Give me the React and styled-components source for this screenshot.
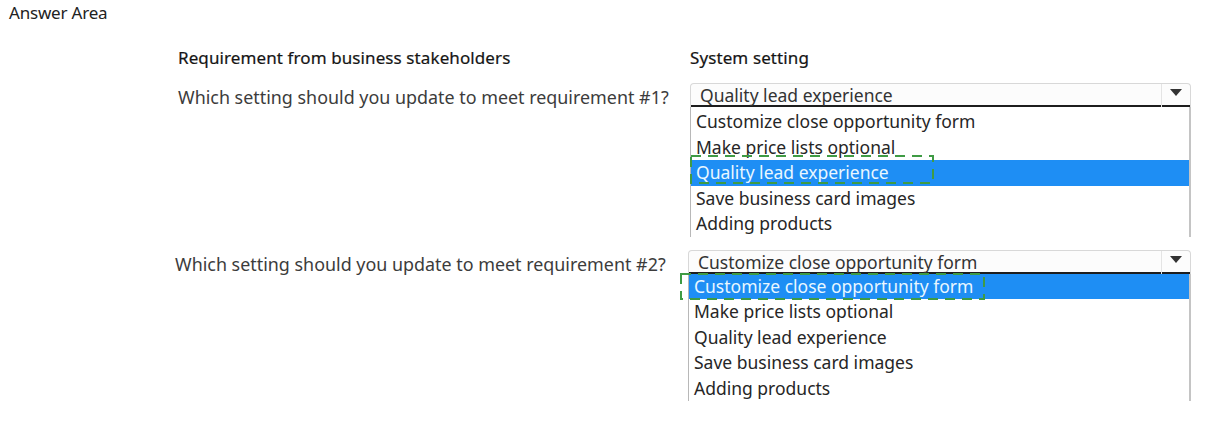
import styled, { createGlobalStyle } from "styled-components"

const Global = createGlobalStyle`
  body {
    margin: 0;
    background: #ffffff;
    font-family: "Noto Sans", "Open Sans", sans-serif;
  }
`

const Page = styled.div`
  width: 1214px;
  height: 448px;
  padding: 3px 0 0 9px;
  box-sizing: border-box;
  background: #fff;
`

const Title = styled.div`
  font-size: 17px;
  color: #222;
  line-height: 20px;
  letter-spacing: -0.2px;
`

const Grid = styled.div`
  display: grid;
  grid-template-columns: 512px 501px;
  margin: 24px 0 0 169px;
`

const Head = styled.div`
  font-size: 17px;
  color: #151515;
  line-height: 22px;
  height: 36px;
  letter-spacing: 0.1px;
  -webkit-text-stroke: 0.2px #151515;
`

const Question = styled.div`
  font-size: 17.9px;
  color: #3c3c3c;
  line-height: 22px;
  padding-top: 3px;
  margin-left: ${(p) => p.$shift || 0}px;
`

const Select = styled.div`
  position: relative;
  margin-left: ${(p) => p.$shift || 0}px;
  margin-bottom: ${(p) => p.$gap || 0}px;
`

const Header = styled.div`
  display: flex;
  height: 24px;
  border: 1px solid #d8d8d8;
  border-bottom: none;
  border-radius: 4px 4px 0 0;
  box-sizing: border-box;
  background: #fcfcfc;
  overflow: hidden;
  box-shadow: inset 0 -2px 0 #1d1d1d;
`

const Value = styled.div`
  flex: 1;
  font-size: 17.5px;
  color: #333;
  line-height: 21px;
  padding: 1px 0 0 9px;
  white-space: nowrap;
  overflow: hidden;
`

const Arrow = styled.div`
  width: 28px;
  border-left: 1px solid #e4e4e4;
  display: flex;
  align-items: center;
  justify-content: center;
  padding-bottom: 6px;
`

const List = styled.div`
  border-left: 1px solid #b8b8b8;
  border-right: 2px solid #c4c4c4;
  padding-top: ${(p) => p.$pad}px;
`

const Option = styled.div`
  height: 25.5px;
  line-height: 25.5px;
  font-size: 17.5px;
  padding-left: 5px;
  white-space: nowrap;
  color: ${(p) => (p.$active ? "#e9f7ff" : "#262626")};
  background: ${(p) => (p.$active ? "#1e8ef4" : "transparent")};
`

const Focus = styled.svg`
  position: absolute;
  overflow: visible;
  pointer-events: none;
`

const options = [
  "Customize close opportunity form",
  "Make price lists optional",
  "Quality lead experience",
  "Save business card images",
  "Adding products",
]

function Dropdown({ value, active, shift, gap, pad, focus }) {
  return (
    <Select $shift={shift} $gap={gap}>
      <Header>
        <Value>{value}</Value>
        <Arrow>
          <svg width="12" height="7" viewBox="0 0 12 7">
            <path d="M0 0 L12 0 L6 7 Z" fill="#333" />
          </svg>
        </Arrow>
      </Header>
      <List $pad={pad}>
        {options.map((o, i) => (
          <Option key={o} $active={i === active}>
            {o}
          </Option>
        ))}
      </List>
      <Focus
        width={focus.width}
        height={focus.height}
        style={{ left: focus.left, top: focus.top }}
      >
        <rect
          x="1"
          y="1"
          width={focus.width - 2}
          height={focus.height - 2}
          fill="none"
          stroke="#3f9b44"
          strokeWidth="2"
          strokeDasharray="10 7"
        />
      </Focus>
    </Select>
  )
}

export default function App() {
  return (
    <>
      <Global />
      <Page>
        <Title>Answer Area</Title>
        <Grid>
          <Head>Requirement from business stakeholders</Head>
          <Head>System setting</Head>
          <Question>Which setting should you update to meet requirement #1?</Question>
          <Dropdown
            value="Quality lead experience"
            active={2}
            gap={13}
            pad={2}
            focus={{ left: 0, top: 72, width: 244, height: 29 }}
          />
          <Question $shift={-3}>Which setting should you update to meet requirement #2?</Question>
          <Dropdown
            value="Customize close opportunity form"
            active={0}
            shift={-2}
            pad={0}
            focus={{ left: -8, top: 23, width: 305, height: 27 }}
          />
        </Grid>
      </Page>
    </>
  )
}
